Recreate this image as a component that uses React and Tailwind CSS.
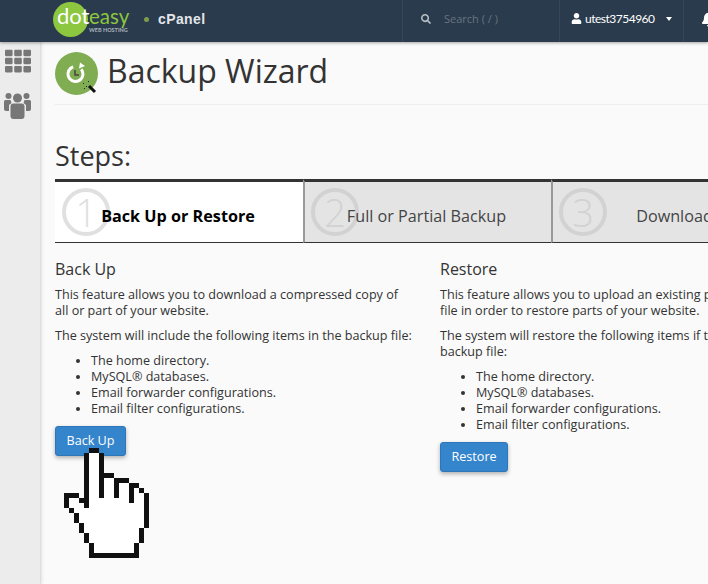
import React from "react";
import { FaTh, FaSearch, FaUser, FaBell } from "react-icons/fa";

const handOutline = [
  [5, 0, 2, 1], [4, 1, 1, 11], [7, 1, 1, 9], [8, 5, 2, 1], [10, 6, 1, 4], [11, 6, 2, 1],
  [13, 7, 1, 4], [14, 7, 1, 1], [15, 8, 1, 1], [16, 9, 1, 7], [15, 16, 1, 3], [14, 19, 1, 3],
  [5, 21, 9, 1], [5, 19, 1, 2], [4, 17, 1, 2], [3, 15, 1, 2], [2, 13, 1, 2], [1, 12, 1, 1],
  [0, 9, 1, 3], [1, 9, 2, 1], [3, 10, 1, 1],
];

function Hand() {
  return (
    <svg className="absolute left-[64px] top-[448px]" width="85" height="110" viewBox="0 0 17 22" shapeRendering="crispEdges">
      <polygon
        fill="#fff"
        points="5,1 7,1 7,6 10,6 10,7 13,7 13,8 15,8 15,9 16,9 16,16 15,16 15,19 14,19 14,21 6,21 6,19 5,19 5,17 4,17 4,15 3,15 3,13 2,13 2,12 1,12 1,10 3,10 3,11 4,11 4,12 5,12"
      />
      {handOutline.map(([x, y, w, h], i) => (
        <rect key={i} x={x} y={y} width={w} height={h} fill="#111" />
      ))}
    </svg>
  );
}

function UsersIcon() {
  return (
    <svg width="27" height="27" viewBox="0 0 27 27" fill="#777" className="mr-[5px]">
      <circle cx="4.5" cy="4" r="3" />
      <circle cx="22.5" cy="4" r="3" />
      <circle cx="13.5" cy="6" r="4.5" />
      <path d="M0 9.5a1.5 1.5 0 0 1 1.5-1.5h5l1 3-2.5 2v6H2a2 2 0 0 1-2-2z" />
      <path d="M27 9.5a1.5 1.5 0 0 0-1.5-1.5h-5l-1 3 2.5 2v6H25a2 2 0 0 0 2-2z" />
      <path d="M6.5 14.5a3 3 0 0 1 3-3h8a3 3 0 0 1 3 3V24a3 3 0 0 1-3 3h-8a3 3 0 0 1-3-3z" />
    </svg>
  );
}

function Step({ n, label, active }) {
  return (
    <div
      className={
        "relative w-[248px] shrink-0 h-[64px] border-t-[3px] border-b border-t-[#333] border-b-[#333] flex items-center justify-center pt-[7px] " +
        (active ? "bg-white text-black font-bold pr-[2px]" : "bg-[#e4e4e4] text-[#444] border-l-2 border-l-[#999] pr-[3px]")
      }
    >
      <div
        className={
          "absolute top-[6px] w-[48px] h-[48px] rounded-full border-[4px] flex items-center justify-center text-[38px] font-light " +
          (active ? "left-[7px] border-[#e0e0e0] text-[#e0e0e0]" : "left-[6px] border-[#d2d2d2] text-[#d2d2d2]")
        }
      >
        {n}
      </div>
      <span className="relative text-[16.2px]">{label}</span>
    </div>
  );
}

function Column({ title, intro, note, button }) {
  return (
    <div className="w-[358px] shrink-0">
      <h2 className="text-[16px] leading-[20px] mb-[8px]">{title}</h2>
      <p className="mb-[9px]">{intro}</p>
      <p className="mb-[9px]">{note}</p>
      <ul className="list-disc pl-[36px] mb-[9px]">
        <li>The home directory.</li>
        <li>MySQL® databases.</li>
        <li>Email forwarder configurations.</li>
        <li>Email filter configurations.</li>
      </ul>
      <button className="h-[30px] px-[10.5px] rounded-[3px] bg-[#3585cd] border border-[#2d76b8] text-white shadow-[0_2px_4px_rgba(0,0,0,0.3)]">
        {button}
      </button>
    </div>
  );
}

export default function App() {
  return (
    <div className="relative w-[708px] h-[584px] overflow-hidden bg-[#fafafa] text-[#333] font-['Open_Sans',sans-serif] text-[12.6px] leading-[16px]">
      <header className="relative z-10 h-[42px] bg-[#2a3b4d] shadow-[0_1px_3px_rgba(0,0,0,0.35)] flex">
        <div className="w-[403px] shrink-0 flex items-center pl-[53px] border-r border-[#35475a]">
          <div className="relative w-[80px] h-[40px] font-['Lato',sans-serif]">
            <div className="w-[35px] h-[35px] mt-[1px] rounded-full bg-[#8dc63f]" />
            <span className="absolute left-[4px] top-[3px] text-[22px] leading-[24px] text-white">dot</span>
            <span className="absolute left-[36px] top-[5px] text-[20.5px] leading-[20px] text-[#8dc63f]">easy</span>
            <span className="absolute left-[36px] top-[26px] text-[5.5px] leading-[6px] font-bold text-[#aab4bd] whitespace-nowrap">WEB HOSTING</span>
          </div>
          <span className="w-[5px] h-[5px] ml-[11px] mb-[3px] rounded-full bg-[#7d9b4a]" />
          <span className="ml-[9px] mb-[4px] text-[14px] font-bold tracking-[0.4px] text-[#e3e6e9] font-['Liberation_Sans',sans-serif]">cPanel</span>
        </div>
        <div className="w-[157px] shrink-0 flex items-center pl-[18px] pb-[4px] border-r border-[#35475a]">
          <FaSearch className="w-[10px] h-[10px] text-[#b9c0c7]" />
          <span className="ml-[13px] text-[11px] text-[#68747f]">Search ( / )</span>
        </div>
        <div className="w-[124px] shrink-0 flex items-center pl-[11px] pb-[5px] border-r border-[#35475a] text-white text-[12px] tracking-[-0.5px] font-['Lato',sans-serif]">
          <FaUser className="w-[11px] h-[11px]" />
          <span className="ml-[3px]">utest3754960</span>
          <span className="ml-[11px] border-x-[3.5px] border-x-transparent border-t-[4px] border-t-white" />
        </div>
        <div className="flex items-center pl-[17px] pb-[5px]">
          <FaBell className="w-[16px] h-[16px] text-white" />
        </div>
      </header>

      <div className="flex h-[542px]">
        <aside className="w-[41px] shrink-0 bg-[#ececec] border-r border-[#dedede] shadow-[1px_0_3px_rgba(0,0,0,0.1)] flex flex-col items-center pt-[6px] gap-[18px] text-[#777]">
          <FaTh className="w-[26px] h-[26px] mr-[4px]" />
          <UsersIcon />
        </aside>

        <main className="flex-1 min-w-0 pl-[14px]">
          <div className="flex items-center gap-[8px] h-[63px] w-[700px] border-b border-[#eeeeee] pt-[3px]">
            <svg width="44" height="46" viewBox="0 0 44 46" className="shrink-0">
              <circle cx="21.5" cy="21.5" r="21.5" fill="#80ad52" />
              <circle cx="20.5" cy="22" r="7.5" fill="none" stroke="#fff" strokeWidth="3" strokeDasharray="38 9" transform="rotate(-40 20.5 22)" />
              <path d="M25 10.5l5 3.5-6 2.5z" fill="#fff" />
              <path d="M20 18v5h4" fill="none" stroke="#444" strokeWidth="1.5" />
              <path d="M34 34l6 6" stroke="#111" strokeWidth="3" />
              <path d="M31 34l1 1M28 31l1 1M33 29l1 1M29 36l1 1" stroke="#222" strokeWidth="1" />
            </svg>
            <h1 className="text-[32px] leading-[40px] text-[#333] whitespace-nowrap -mt-[7px]">Backup Wizard</h1>
          </div>

          <h2 className="mt-[32px] text-[27px] leading-[38px] whitespace-nowrap">Steps:</h2>
          <div className="flex w-[760px] mt-[4px]">
            <Step n="1" label="Back Up or Restore" active />
            <Step n="2" label="Full or Partial Backup" />
            <Step n="3" label="Download" />
          </div>

          <div className="flex gap-[27px] w-[760px] mt-[16px]">
            <Column
              title="Back Up"
              intro="This feature allows you to download a compressed copy of all or part of your website."
              note="The system will include the following items in the backup file:"
              button="Back Up"
            />
            <Column
              title="Restore"
              intro="This feature allows you to upload an existing partial backup file in order to restore parts of your website."
              note="The system will restore the following items if they are in the backup file:"
              button="Restore"
            />
          </div>
        </main>
      </div>

      <Hand />
    </div>
  );
}
